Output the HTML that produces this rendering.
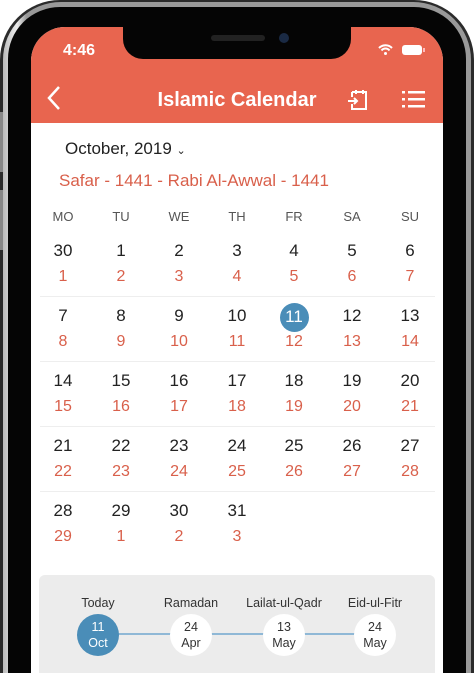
<!DOCTYPE html><html style="height:673px;overflow:hidden"><head><style>
body{margin:0;width:474px;height:673px;overflow:hidden;background:#fff;font-family:"Liberation Sans",sans-serif;position:relative}
.abs{position:absolute}
.c{position:absolute;text-align:center;width:40px;margin-left:-20px}
.g{font-size:17px;color:#222;}
.h{font-size:16px;color:#d9604b;}
.w{font-size:13px;color:#555;}
</style></head><body>
<div class="abs" style="left:0;top:0;width:474px;height:673px;background:#2b2b2b;border-radius:60px 60px 0 0"></div>
<div class="abs" style="left:3px;top:2px;width:468px;height:671px;background:linear-gradient(90deg,#bbb,#eee 3%,#999 5%);border-radius:58px 58px 0 0"></div>
<div class="abs" style="left:8px;top:7px;width:458px;height:666px;background:#050505;border-radius:52px 52px 0 0"></div>
<div class="abs" style="left:0;top:112px;width:3px;height:60px;background:#888"></div>
<div class="abs" style="left:0;top:190px;width:3px;height:60px;background:#888"></div>
<div class="abs" style="left:31px;top:27px;width:412px;height:646px;background:#fff;border-radius:34px 34px 0 0;overflow:hidden">
 <div class="abs" style="left:0;top:0;width:412px;height:96px;background:#e8654f"></div>
 <div class="abs" style="left:92px;top:-2px;width:228px;height:34px;background:#050505;border-radius:0 0 20px 20px"></div>
 <div class="abs" style="left:180px;top:8px;width:54px;height:6px;background:#222;border-radius:3px"></div>
 <div class="abs" style="left:248px;top:6px;width:10px;height:10px;background:#1a2a44;border-radius:50%"></div>
 <div class="abs" style="left:32px;top:15px;color:#fff;font-size:16px;font-weight:bold">4:46</div>
 <svg class="abs" style="left:344px;top:16px" width="60" height="14"><path d="M4 5a9 9 0 0 1 13 0M6.5 7.5a5 5 0 0 1 8 0" stroke="#fff" stroke-width="2" fill="none"/><circle cx="10.5" cy="10.5" r="1.5" fill="#fff"/><rect x="27" y="2" width="20" height="10" rx="3" fill="#fff"/><rect x="48" y="5" width="2" height="4" fill="#fbb"/></svg>
 <svg class="abs" style="left:14px;top:58px" width="20" height="26"><path d="M14 2L4 13l10 11" stroke="#fff" stroke-width="2.5" fill="none"/></svg>
 <div class="abs" style="left:0;width:412px;top:62px;text-align:center;color:#fff;font-size:20px;font-weight:bold">Islamic Calendar</div>
 <svg class="abs" style="left:314px;top:60px" width="26" height="26"><path d="M7 5h14v17H7v-5M7 10V5M11 3v4M18 3v4M3 14h9M9 11l3 3-3 3" stroke="#fff" stroke-width="2" fill="none"/></svg>
 <svg class="abs" style="left:370px;top:62px" width="26" height="22"><g fill="#fff"><rect x="1" y="2" width="3" height="2.5"/><rect x="7" y="2" width="17" height="2.5"/><rect x="1" y="9" width="3" height="2.5"/><rect x="7" y="9" width="17" height="2.5"/><rect x="1" y="16" width="3" height="2.5"/><rect x="7" y="16" width="17" height="2.5"/></g></svg>
 <div class="abs" style="left:34px;top:112px;font-size:17px;color:#222">October, 2019 <span style="font-size:11px">⌄</span></div>
 <div class="abs" style="left:28px;top:144px;font-size:17px;color:#d9604b">Safar - 1441 - Rabi Al-Awwal - 1441</div>
 <div class="abs" style="left:8px;top:548px;width:396px;height:120px;background:#ececec;border-radius:6px"></div>
</div>
<div id="cal"></div>
<script>
var xs=[63,121,179,237,294,352,410],hd=["MO","TU","WE","TH","FR","SA","SU"],o="";
hd.forEach((d,i)=>o+=`<div class="c w" style="left:${xs[i]}px;top:209px">${d}</div>`);
var G=[[30,1,2,3,4,5,6],[7,8,9,10,11,12,13],[14,15,16,17,18,19,20],[21,22,23,24,25,26,27],[28,29,30,31]];
var H=[[1,2,3,4,5,6,7],[8,9,10,11,12,13,14],[15,16,17,18,19,20,21],[22,23,24,25,26,27,28],[29,1,2,3]];
G.forEach((r,j)=>{var y=241+j*65;r.forEach((g,i)=>{
if(j==1&&i==4)o+=`<div class="abs" style="left:280px;top:${y-3}px;width:29px;height:29px;border-radius:50%;background:#4a8db8"></div><div class="c g" style="left:294px;top:${y+1}px;color:#fff">${g}</div>`;
else o+=`<div class="c g" style="left:${xs[i]}px;top:${y}px">${g}</div>`;
o+=`<div class="c h" style="left:${xs[i]}px;top:${y+27}px">${H[j][i]}</div>`;});
if(j<4)o+=`<div class="abs" style="left:40px;top:${y+55}px;width:395px;height:1px;background:#eee"></div>`;});
o+=`<div class="abs" style="left:98px;top:633px;width:278px;height:2px;background:#8fb8d6"></div>`;
[[98,"Today","11","Oct"],[191,"Ramadan","24","Apr"],[284,"Lailat-ul-Qadr","13","May"],[375,"Eid-ul-Fitr","24","May"]].forEach((e,k)=>{
o+=`<div class="abs" style="left:${e[0]-50}px;width:100px;text-align:center;top:596px;font-size:12.5px;color:#333">${e[1]}</div>`;
o+=`<div class="abs" style="left:${e[0]-21}px;top:614px;width:42px;height:42px;border-radius:50%;background:${k?'#fff':'#4a8db8'};color:${k?'#333':'#fff'};font-size:12.5px;text-align:center;line-height:16px;box-sizing:border-box;padding-top:5px">${e[2]}<br>${e[3]}</div>`;});
document.getElementById('cal').innerHTML=o;
</script>
</body></html>
